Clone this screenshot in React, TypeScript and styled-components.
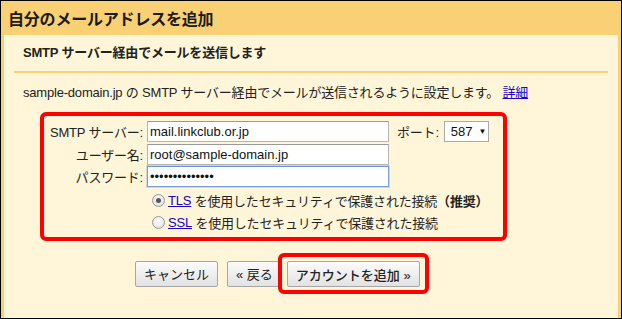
import React from "react";
import styled, { createGlobalStyle } from "styled-components";

const Global = createGlobalStyle`
  html, body { margin: 0; padding: 0; background: #fff; }
  body {
    font-family: "Liberation Sans", Arial, "Noto Sans CJK JP", sans-serif;
    font-size: 13px;
    letter-spacing: -0.2px;
    color: #222;
  }
`;

const Frame = styled.div`
  width: 622px;
  height: 319px;
  box-sizing: border-box;
  border: 1px solid #000;
  background: #f9d073;
  display: flex;
  flex-direction: column;
`;

const Header = styled.div`
  height: 34px;
  flex: none;
  padding-left: 7px;
  display: flex;
  align-items: center;
  font-size: 16px;
  font-weight: bold;
  color: #1a1a1a;
`;

const Body = styled.div`
  flex: 1;
  margin: 0 3px;
  background: #fff6d9;
`;

const SubHeading = styled.div`
  padding: 9px 0 0 19px;
  line-height: 17px;
  font-weight: bold;
`;

const Rule = styled.div`
  margin: 10px 10px 0;
  height: 2px;
  background: #f9d073;
`;

const Desc = styled.div`
  margin: 11px 0 0 19px;
  line-height: 17px;
`;

const Link = styled.a`
  color: #2200cc;
  text-decoration: underline;
  cursor: pointer;
`;

const RedBox = styled.div`
  margin: 11px 0 0 36px;
  width: 467px;
  box-sizing: border-box;
  border: 4px solid #f00;
  border-radius: 6px;
  padding: 5px 0 4px 0;
`;

const Row = styled.div<{ $last?: boolean }>`
  display: flex;
  align-items: center;
  height: 21px;
  margin-bottom: ${(p) => (p.$last ? "2px" : "1.5px")};
`;

const Label = styled.label`
  width: 99px;
  margin-right: 4px;
  text-align: right;
  white-space: nowrap;
  flex: none;
`;

const TextInput = styled.input<{ $focused?: boolean }>`
  width: 242px;
  height: 21px;
  box-sizing: border-box;
  border: 1px solid ${(p) => (p.$focused ? "#7b9fd9" : "#b5b5b5")};
  border-top-color: ${(p) => (p.$focused ? "#6d92d0" : "#9a9a9a")};
  box-shadow: ${(p) => (p.$focused ? "0 0 0 1px rgba(123,159,217,0.35)" : "none")};
  padding: 0 2px;
  font-family: "Liberation Sans", Arial, sans-serif;
  font-size: 13px;
  color: #111;
  background: #fff;
  outline: none;
  flex: none;
`;

const PortLabel = styled.span`
  margin-left: 8px;
`;

const Select = styled.div`
  margin-left: 5px;
  width: 45px;
  height: 21px;
  box-sizing: border-box;
  border: 1px solid #a9a9a9;
  background: #fff;
  display: flex;
  align-items: center;
  padding-left: 6px;
  gap: 6px;
  font-size: 13px;
  letter-spacing: normal;
  color: #111;
  flex: none;
`;

const Arrow = styled.span`
  font-size: 8px;
  color: #111;
`;

const RadioRow = styled.div`
  display: flex;
  align-items: center;
  height: 22px;
  margin-left: 108px;
  white-space: nowrap;
`;

const Radio = styled.span<{ $checked?: boolean }>`
  width: 13px;
  height: 13px;
  box-sizing: border-box;
  border-radius: 50%;
  border: 1px solid #9a9a9a;
  background: radial-gradient(circle at 50% 40%, #ffffff 0%, #e4e4e4 70%, #d0d0d0 100%);
  margin-right: 3px;
  display: flex;
  align-items: center;
  justify-content: center;
  flex: none;
  &::after {
    content: "";
    display: ${(p) => (p.$checked ? "block" : "none")};
    width: 5px;
    height: 5px;
    border-radius: 50%;
    background: #555;
  }
`;

const Strong = styled.b`
  font-weight: bold;
`;

const ButtonRow = styled.div`
  margin: 12px 0 0 131px;
  display: flex;
  align-items: center;
`;

const Button = styled.button<{ $primary?: boolean; $gap?: number }>`
  height: 26px;
  box-sizing: border-box;
  padding: 0 8px;
  margin-left: ${(p) => p.$gap ?? 0}px;
  border: 1px solid #a6a6a6;
  border-radius: 2px;
  background: linear-gradient(#fbfbfb, #e2e2e2);
  font-family: "Liberation Sans", Arial, "Noto Sans CJK JP", sans-serif;
  font-size: 13px;
  font-weight: ${(p) => (p.$primary ? 500 : "normal")};
  color: #222;
  white-space: nowrap;
  cursor: pointer;
`;

const Highlight = styled.div`
  position: relative;
  margin-left: -4px;
  border: 4px solid #f00;
  border-radius: 6px;
  padding: 4px 5px 3px 5px;
  display: flex;
`;

export default function App() {
  return (
    <>
      <Global />
      <Frame>
        <Header>自分のメールアドレスを追加</Header>
        <Body>
          <SubHeading>SMTP サーバー経由でメールを送信します</SubHeading>
          <Rule />
          <Desc>
            sample-domain.jp の SMTP サーバー経由でメールが送信されるように設定します。 <Link>詳細</Link>
          </Desc>
          <RedBox>
            <Row>
              <Label>SMTP サーバー:</Label>
              <TextInput readOnly defaultValue="mail.linkclub.or.jp" />
              <PortLabel>ポート:</PortLabel>
              <Select>
                587 <Arrow>▼</Arrow>
              </Select>
            </Row>
            <Row>
              <Label>ユーザー名:</Label>
              <TextInput readOnly defaultValue="root@sample-domain.jp" />
            </Row>
            <Row $last>
              <Label>パスワード:</Label>
              <TextInput $focused type="password" readOnly defaultValue="abcdefghijklmn" />
            </Row>
            <RadioRow>
              <Radio $checked />
              <Link>TLS</Link>&nbsp;を使用したセキュリティで保護された接続<Strong>（推奨）</Strong>
            </RadioRow>
            <RadioRow>
              <Radio />
              <Link>SSL</Link>&nbsp;を使用したセキュリティで保護された接続
            </RadioRow>
          </RedBox>
          <ButtonRow>
            <Button>キャンセル</Button>
            <Button $gap={9}>« 戻る</Button>
            <Highlight>
              <Button $primary>アカウントを追加 »</Button>
            </Highlight>
          </ButtonRow>
        </Body>
      </Frame>
    </>
  );
}
